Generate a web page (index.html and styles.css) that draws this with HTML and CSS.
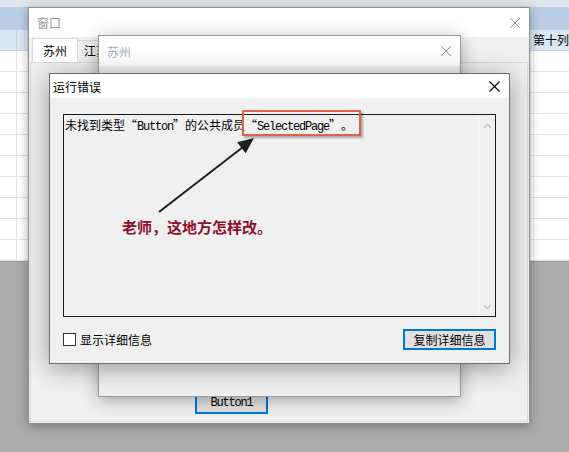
FILE: index.html
```html
<!doctype html>
<html>
	<head>
		<title>运行错误</title>
		<link rel="stylesheet" href="styles.css">
	</head>
	<body>
		<div class="desk">
			<!-- background sheet -->
			<div class="sheet">
				<div class="sheetTop"></div>
				<div class="sheetBar"></div>
				<div class="sheetHead">
					<div class="headCorner"></div>
					<div class="headGap"></div>
					<div class="headCell">第十列</div>
				</div>
				<div class="sheetRows">
					<div class="sheetRow"><div class="rowHead"></div><div class="rowCell"></div></div>
					<div class="sheetRow"><div class="rowHead"></div><div class="rowCell"></div></div>
					<div class="sheetRow"><div class="rowHead"></div><div class="rowCell"></div></div>
					<div class="sheetRow"><div class="rowHead"></div><div class="rowCell"></div></div>
					<div class="sheetRow"><div class="rowHead"></div><div class="rowCell"></div></div>
					<div class="sheetRow"><div class="rowHead"></div><div class="rowCell"></div></div>
					<div class="sheetRow"><div class="rowHead"></div><div class="rowCell"></div></div>
					<div class="sheetRow"><div class="rowHead"></div><div class="rowCell"></div></div>
					<div class="sheetRow"><div class="rowHead"></div><div class="rowCell"></div></div>
					<div class="sheetRow"><div class="rowHead"></div><div class="rowCell"></div></div>
				</div>
				<div class="sheetEmpty"></div>
			</div>

			<!-- main window -->
			<div class="win winMain">
				<div class="titleBar">
					<span class="titleText">窗口</span>
					<svg class="closeIcon" width="10" height="10" viewBox="0 0 10 10"><path d="M0 0L10 10M10 0L0 10" stroke="currentColor" stroke-width="1"/></svg>
				</div>
				<div class="winBody">
					<div class="tabs">
						<div class="tab tabActive">苏州</div>
						<div class="tab tabClip"><span>江苏</span></div>
					</div>
					<div class="tabPage">
						<div class="btn btnCode">Button1</div>
					</div>
				</div>
			</div>

			<!-- child window -->
			<div class="win winSub">
				<div class="titleBar">
					<span class="titleText">苏州</span>
					<svg class="closeIcon" width="10" height="10" viewBox="0 0 10 10"><path d="M0 0L10 10M10 0L0 10" stroke="currentColor" stroke-width="1"/></svg>
				</div>
				<div class="winBody"></div>
			</div>

			<!-- error dialog -->
			<div class="win dlg">
				<div class="titleBar">
					<span class="titleText">运行错误</span>
					<svg class="closeIcon" width="11" height="11" viewBox="0 0 11 11"><path d="M0.5 0.5L10.5 10.5M10.5 0.5L0.5 10.5" stroke="currentColor" stroke-width="1.1"/></svg>
				</div>
				<div class="dlgBody">
					<div class="msgBox">
						<div class="msgText">未找到类型<span class="qOpen">“</span><span class="code">Button</span><span class="qClose">”</span>的公共成员<span class="qOpen">“</span><span class="code">SelectedPage</span><span class="qClose">”</span>。</div>
						<div class="vScroll">
							<svg width="9" height="6" viewBox="0 0 9 6"><path d="M1 5L4.5 1.5L8 5" fill="none" stroke="#c4c4c4" stroke-width="1.6"/></svg>
							<svg width="9" height="6" viewBox="0 0 9 6"><path d="M1 1L4.5 4.5L8 1" fill="none" stroke="#c4c4c4" stroke-width="1.6"/></svg>
						</div>
					</div>
					<div class="dlgFooter">
						<label class="check"><span class="checkBox"></span>显示详细信息</label>
						<div class="btn btnCopy">复制详细信息</div>
					</div>
				</div>
			</div>

			<!-- annotation drawn over the screenshot -->
			<div class="mark"></div>
			<svg class="arrow" width="569" height="452" viewBox="0 0 569 452">
				<line x1="159" y1="212" x2="243" y2="147" stroke="#1e1e1e" stroke-width="2"/>
				<polygon points="254,138 245.7,153.3 237.1,142.3" fill="#1e1e1e"/>
			</svg>
			<div class="noteText">老师，这地方怎样改。</div>
		</div>
	</body>
</html>
```

FILE: styles.css
```css
* {
	box-sizing: border-box;
}

body {
	margin: 0;
	width: 569px;
	height: 452px;
	overflow: hidden;
	background: #ababab;
	font-family: "Noto Sans CJK SC", "Liberation Sans", sans-serif;
	font-size: 12px;
	color: #000;
}

.desk {
	position: relative;
	width: 569px;
	height: 452px;
}

/* background sheet */
.sheet {
	display: flex;
	flex-direction: column;
	height: 100%;
}

.sheetTop {
	height: 7px;
	background: #dfe5ec;
}

.sheetBar {
	height: 23px;
	background: #b9cde5;
}

.sheetHead {
	display: flex;
	height: 21px;
	background: #dbe6f3;
	border-bottom: 1px solid #c9d5e3;
}

.headCorner {
	width: 17px;
	border-right: 1px solid #c4d0de;
}

.headGap {
	width: 514px;
	border-right: 1px solid #c4d0de;
}

.headCell {
	padding-left: 6px;
	line-height: 20px;
	white-space: nowrap;
}

.sheetRows {
	background: #fff;
}

.sheetRow {
	display: flex;
	height: 21px;
	border-bottom: 1px solid #e3e3e3;
}

.rowHead {
	width: 17px;
	border-right: 1px solid #e3e3e3;
}

.rowCell {
	flex: 1;
}

.sheetEmpty {
	flex: 1;
	background: #ababab;
	border-top: 1px solid #9c9c9c;
}

/* windows */
.win {
	position: absolute;
	display: flex;
	flex-direction: column;
	background: #f0f0f0;
}

.titleBar {
	display: flex;
	align-items: center;
	justify-content: space-between;
	background: #fff;
	flex-shrink: 0;
}

.winBody {
	flex: 1;
	display: flex;
	flex-direction: column;
	padding: 0 1px 1px 1px;
}

.winMain {
	left: 28px;
	top: 7px;
	width: 502px;
	height: 417px;
	border: 1px solid #8e8e8e;
	box-shadow: 0 2px 10px rgba(0, 0, 0, 0.3);
}

.winMain .titleBar {
	height: 29px;
	padding: 0 9px 0 8px;
	color: #9a9a9a;
}

.tabs {
	display: flex;
	align-items: flex-end;
	height: 25px;
	padding-left: 2px;
}

.tab {
	height: 22px;
	padding: 0 10px;
	line-height: 20px;
	background: #f0f0f0;
	border: 1px solid #d9d9d9;
	border-bottom: none;
	margin-left: -1px;
}

.tabActive {
	height: 24px;
	width: 46px;
	margin-left: 0;
	padding: 2px 0 0 0;
	text-align: center;
	background: #fff;
	position: relative;
	z-index: 1;
}

/* the second tab runs under the child window */
.tabClip {
	width: 22px;
	padding: 0 0 0 6px;
	border-right: none;
	overflow: hidden;
	white-space: nowrap;
}

.tabPage {
	flex: 1;
	display: flex;
	align-items: flex-end;
	padding: 0 0 7px 164px;
	border: 1px solid #d9d9d9;
	background: #f0f0f0;
}

.btn {
	display: flex;
	align-items: center;
	justify-content: center;
	background: #e1e1e1;
	border: 2px solid #0078d7;
	white-space: nowrap;
}

.btnCode {
	width: 73px;
	height: 23px;
	font-family: "Liberation Mono", monospace;
	letter-spacing: -1.2px;
}

.winSub {
	left: 98px;
	top: 35px;
	width: 363px;
	height: 362px;
	border: 1px solid #9a9a9a;
	box-shadow: 0 3px 16px rgba(0, 0, 0, 0.32);
}

.winSub .titleBar {
	height: 30px;
	padding: 0 9px 0 8px;
	color: #9eafc0;
}

.winSub .closeIcon {
	color: #8a8a8a;
}

/* error dialog */
.dlg {
	left: 49px;
	top: 73px;
	width: 461px;
	height: 291px;
	border: 1px solid #6e6e6e;
	box-shadow: 0 4px 24px rgba(0, 0, 0, 0.38);
}

.dlg .titleBar {
	height: 24px;
	padding: 0 9px 0 3px;
}

.dlgBody {
	flex: 1;
	display: flex;
	flex-direction: column;
	padding: 16px 13px 12px 13px;
}

.msgBox {
	display: flex;
	height: 203px;
	border: 1px solid #1a1a1a;
	background: #f0f0f0;
}

.msgText {
	flex: 1;
	padding: 2px 0 0 1px;
	line-height: 16px;
	white-space: nowrap;
}

.code {
	font-family: "Liberation Mono", monospace;
	letter-spacing: -1.2px;
}

/* full-width quotes, as the dialog font draws them */
.qOpen,
.qClose {
	display: inline-block;
	width: 12px;
}

.qOpen {
	text-align: right;
}

.qClose {
	text-align: left;
}

.vScroll {
	width: 17px;
	display: flex;
	flex-direction: column;
	align-items: center;
	justify-content: space-between;
	padding: 8px 0 6px 0;
	border-left: 1px solid #fafafa;
}

.dlgFooter {
	display: flex;
	align-items: center;
	justify-content: space-between;
	margin-top: 12px;
	height: 21px;
}

.check {
	display: flex;
	align-items: center;
	gap: 4px;
}

.checkBox {
	width: 13px;
	height: 13px;
	background: #fff;
	border: 1px solid #333;
}

.btnCopy {
	width: 93px;
	height: 21px;
}

/* annotation */
.mark {
	position: absolute;
	left: 242px;
	top: 110px;
	width: 119px;
	height: 26px;
	border: 2px solid #da6444;
	box-shadow: 2px 2px 2px rgba(0, 0, 0, 0.3);
}

.arrow {
	position: absolute;
	left: 0;
	top: 0;
}

.noteText {
	position: absolute;
	left: 122px;
	top: 219px;
	font-size: 15px;
	line-height: 16px;
	font-weight: bold;
	color: #8c0f2c;
	white-space: nowrap;
}
```
